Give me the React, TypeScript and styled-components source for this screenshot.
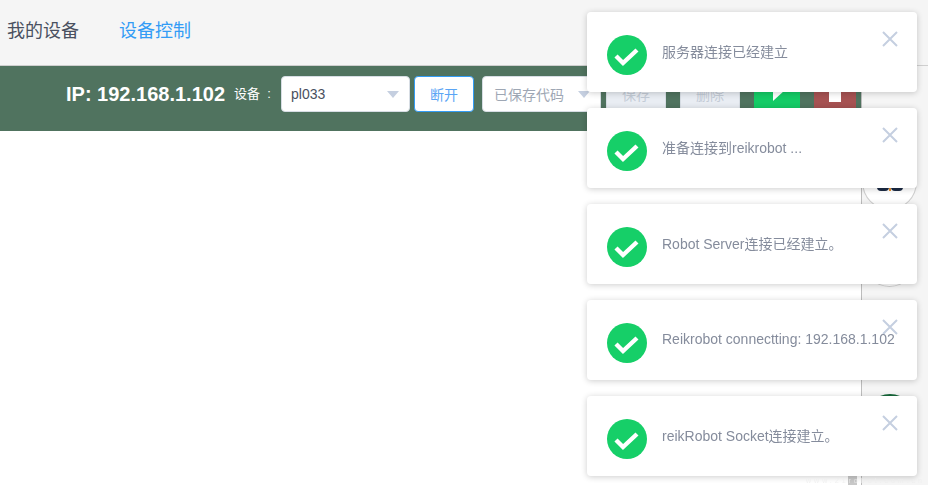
import styled, { createGlobalStyle } from "styled-components";

const GlobalStyle = createGlobalStyle`
  html, body {
    margin: 0;
    height: 100%;
    overflow: hidden;
    background: #fff;
    font-family: "Liberation Sans", "Noto Sans CJK SC", sans-serif;
  }
  #root {
    height: 100%;
  }
`;

const notices = [
  "服务器连接已经建立",
  "准备连接到reikrobot ...",
  "Robot Server连接已经建立。",
  "Reikrobot connectting: 192.168.1.102",
  "reikRobot Socket连接建立。",
];

function App() {
  return (
    <Page>
      <GlobalStyle />
      <TopNav>
        <NavLink>我的设备</NavLink>
        <NavLink $active>设备控制</NavLink>
      </TopNav>
      <Body>
        <Workspace>
          <Toolbar>
            <IpLabel>IP: 192.168.1.102</IpLabel>
            <DeviceLabel>设备{"\u00a0\u00a0"}:</DeviceLabel>
            <SelectBox $width={129}>
              <span>pl033</span>
              <Caret />
            </SelectBox>
            <ConnectButton>断开</ConnectButton>
            <SelectBox $width={119} $placeholder>
              <span>已保存代码</span>
              <Caret />
            </SelectBox>
            <CodeButton>保存</CodeButton>
            <CodeButton>删除</CodeButton>
            <RunButton $bg="#14cb66" $width={46}>
              <svg width="16" height="24" viewBox="0 0 16 24">
                <polygon points="4,1 16,12 4,23" fill="#fff" />
              </svg>
            </RunButton>
            <RunButton $bg="#a65252" $width={42}>
              <StopMark />
            </RunButton>
          </Toolbar>
          <Canvas>
            <ScrollThumb />
          </Canvas>
        </Workspace>
        <Sidebar>
          <RobotBadge>
            <svg width="26" height="14" viewBox="0 0 26 14">
              <rect x="0" y="0" width="12" height="14" rx="4" fill="#1c2b45" />
              <rect x="14" y="0" width="12" height="14" rx="4" fill="#1c2b45" />
              <rect x="12" y="0" width="2" height="14" fill="#e8912c" />
            </svg>
          </RobotBadge>
          <RobotBadge />
          <RobotBadge />
          <GreenBadge />
        </Sidebar>
      </Body>
      <NoticeStack>
        {notices.map((text) => (
          <Notice key={text}>
            <svg width="40" height="40" viewBox="0 0 40 40">
              <circle cx="20" cy="20" r="20" fill="#16cf68" />
              <polyline
                points="9,21 16,28 30,15"
                fill="none"
                stroke="#fff"
                strokeWidth="4.4"
              />
            </svg>
            <NoticeText>{text}</NoticeText>
            <CloseIcon width="16" height="16" viewBox="0 0 16 16">
              <path d="M1 1 L15 15 M15 1 L1 15" stroke="#c5cfe0" strokeWidth="2" />
            </CloseIcon>
          </Notice>
        ))}
      </NoticeStack>
      <Watermark>www.21robot.com.cn</Watermark>
    </Page>
  );
}

const Page = styled.div`
  display: flex;
  flex-direction: column;
  height: 100%;
  background: #fff;
`;

const TopNav = styled.div`
  display: flex;
  align-items: center;
  gap: 40px;
  height: 57px;
  padding: 0 7px 8px;
  background: #f5f5f5;
  border-bottom: 1px solid #cfcfcf;
  flex-shrink: 0;
`;

const NavLink = styled.a<{ $active?: boolean }>`
  font-size: 18px;
  color: ${(p) => (p.$active ? "#339cf5" : "#495060")};
`;

const Body = styled.div`
  flex: 1;
  display: flex;
  min-height: 0;
`;

const Workspace = styled.div`
  width: 861px;
  display: flex;
  flex-direction: column;
  flex-shrink: 0;
`;

const Toolbar = styled.div`
  display: flex;
  align-items: flex-start;
  height: 55px;
  padding: 10px 0 0 66px;
  background: #50735f;
  & > * {
    flex-shrink: 0;
  }
`;

const IpLabel = styled.div`
  font-size: 20px;
  font-weight: 700;
  color: #fff;
  line-height: 36px;
  width: 168px;
  white-space: nowrap;
`;

const DeviceLabel = styled.div`
  font-size: 13px;
  color: #fff;
  line-height: 36px;
  width: 47px;
  white-space: nowrap;
`;

const SelectBox = styled.div<{ $width: number; $placeholder?: boolean }>`
  box-sizing: border-box;
  display: flex;
  align-items: center;
  justify-content: space-between;
  width: ${(p) => p.$width}px;
  height: 36px;
  padding: 0 10px 0 ${(p) => (p.$placeholder ? 11 : 9)}px;
  margin-right: ${(p) => (p.$placeholder ? 5 : 4)}px;
  background: #fff;
  border: 1px solid #d7dde4;
  border-radius: 4px;
  font-size: 14px;
  color: ${(p) => (p.$placeholder ? "#9ea7b4" : "#495060")};
`;

const Caret = styled.i`
  width: 0;
  height: 0;
  border-left: 6px solid transparent;
  border-right: 6px solid transparent;
  border-top: 7px solid #c5cfe0;
  margin-top: 1px;
`;

const ConnectButton = styled.button`
  box-sizing: border-box;
  width: 60px;
  height: 36px;
  margin-right: 8px;
  padding: 0;
  background: #fff;
  border: 1px solid #339cf5;
  border-radius: 4px;
  font: inherit;
  font-size: 14px;
  color: #5aa5f5;
`;

const CodeButton = styled.button`
  box-sizing: border-box;
  width: 60px;
  height: 36px;
  margin-right: 14px;
  padding: 0;
  background: #e9edf3;
  border: 1px solid #d7dde4;
  border-radius: 4px;
  font: inherit;
  font-size: 14px;
  color: #c3cbd6;
`;

const RunButton = styled.div<{ $bg: string; $width: number }>`
  display: flex;
  align-items: flex-start;
  justify-content: center;
  width: ${(p) => p.$width}px;
  height: 36px;
  margin-right: 14px;
  padding-top: 2px;
  box-sizing: border-box;
  background: ${(p) => p.$bg};
  &:last-child {
    margin-right: 0;
  }
`;

const StopMark = styled.i`
  width: 12px;
  height: 24px;
  background: #fff;
`;

const Canvas = styled.div`
  flex: 1;
  position: relative;
  background: #fff;
`;

const ScrollThumb = styled.i`
  position: absolute;
  right: 4px;
  bottom: 0;
  width: 9px;
  height: 10px;
  background: #c8c8c8;
`;

const Sidebar = styled.div`
  flex: 1;
  display: flex;
  flex-direction: column;
  gap: 21px;
  padding: 88px 0 0;
  background: #f5f5f5;
  border-left: 1px solid #bdbdbd;
  overflow: hidden;
`;

const RobotBadge = styled.div`
  box-sizing: border-box;
  display: flex;
  align-items: flex-start;
  justify-content: center;
  width: 55px;
  height: 56px;
  flex-shrink: 0;
  padding-top: 22px;
  background: #fff;
  border: 1px solid #cfcfcf;
  border-radius: 50%;
`;

const GreenBadge = styled.div`
  width: 52px;
  height: 52px;
  flex-shrink: 0;
  margin: 9px 0 0 2px;
  background: #17683a;
  border-radius: 50%;
`;

const NoticeStack = styled.div`
  position: fixed;
  top: 12px;
  left: 587px;
  width: 330px;
  display: flex;
  flex-direction: column;
  gap: 16px;
`;

const Notice = styled.div`
  position: relative;
  box-sizing: border-box;
  display: flex;
  align-items: center;
  gap: 15px;
  height: 80px;
  padding: 6px 0 0 20px;
  background: #fff;
  border-radius: 4px;
  box-shadow: 0 1px 6px rgba(0, 0, 0, 0.2);
`;

const NoticeText = styled.div`
  font-size: 14px;
  color: #858c9c;
  margin-top: -8px;
  white-space: nowrap;
  position: relative;
  z-index: 1;
`;

const CloseIcon = styled.svg`
  position: absolute;
  top: 19px;
  right: 19px;
`;

const Watermark = styled.div`
  position: fixed;
  right: 3px;
  bottom: 0;
  font-size: 7px;
  line-height: 9px;
  letter-spacing: 3px;
  white-space: nowrap;
  color: rgba(238, 238, 238, 0.8);
`;

export default App;
